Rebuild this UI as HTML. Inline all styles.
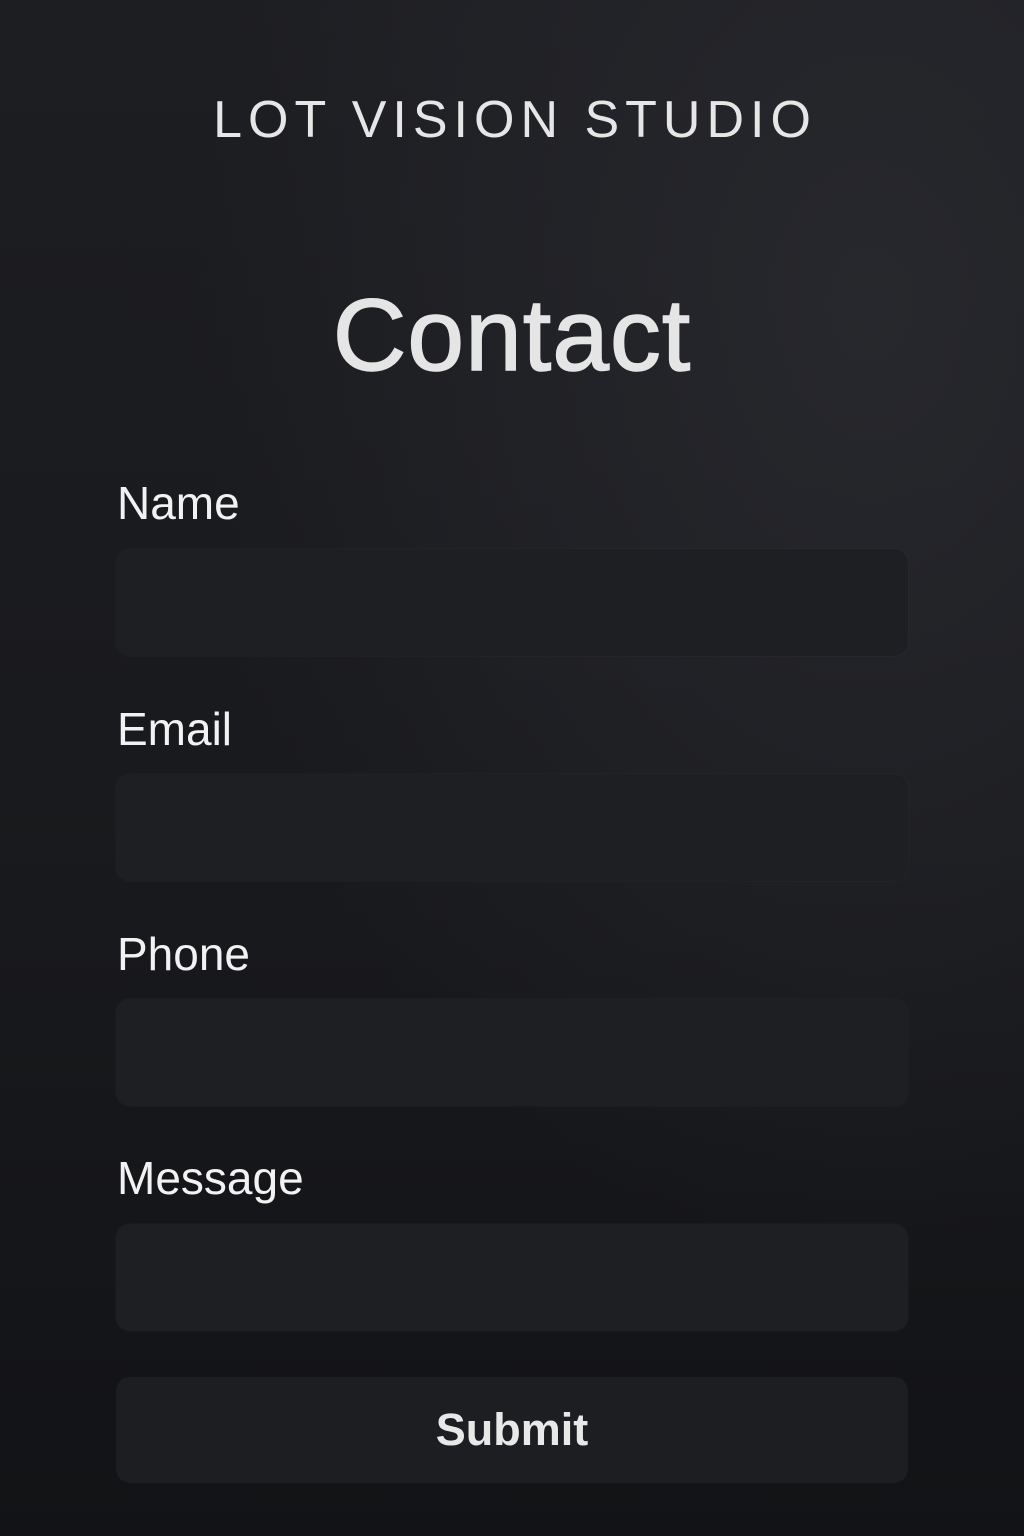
<!DOCTYPE html>
<html><head><meta charset="utf-8"><style>
html,body{margin:0;padding:0}
body{width:1024px;height:1536px;overflow:hidden;position:relative;font-family:"Liberation Sans",sans-serif;
background:radial-gradient(ellipse at 85% 20%,#27282d 0%,rgba(39,40,45,0) 55%),linear-gradient(180deg,#1d1e22 0%,#18191c 60%,#121316 100%);}
.brand{position:absolute;top:90px;left:0;width:1024px;text-align:center;color:#e6e6e6;font-size:52px;letter-spacing:6px;font-weight:300;line-height:60px;padding-left:6px;box-sizing:border-box}
h1{position:absolute;top:280px;left:0;width:1024px;text-align:center;margin:0;color:#e5e5e5;font-size:102px;font-weight:normal;line-height:110px;-webkit-text-stroke:1.5px #e5e5e5;letter-spacing:1px}
.lbl{position:absolute;left:117px;color:#f2f2f2;font-size:46px;line-height:50px}
.f{position:absolute;left:116px;width:792px;height:107px;border-radius:14px;background:#1e1f23;box-shadow:0 0 0 1px rgba(255,255,255,0.02)}
.btn{position:absolute;left:116px;top:1377px;width:792px;height:106px;border-radius:14px;background:#1d1e22;color:#e8e8e8;font-size:45px;font-weight:bold;text-align:center;line-height:106px}
</style></head><body>
<div class="brand">LOT VISION STUDIO</div>
<h1>Contact</h1>
<div class="lbl" style="top:478px">Name</div>
<div class="f" style="top:549px"></div>
<div class="lbl" style="top:704px">Email</div>
<div class="f" style="top:774px"></div>
<div class="lbl" style="top:929px">Phone</div>
<div class="f" style="top:999px"></div>
<div class="lbl" style="top:1153px">Message</div>
<div class="f" style="top:1224px"></div>
<div class="btn">Submit</div>
</body></html>
